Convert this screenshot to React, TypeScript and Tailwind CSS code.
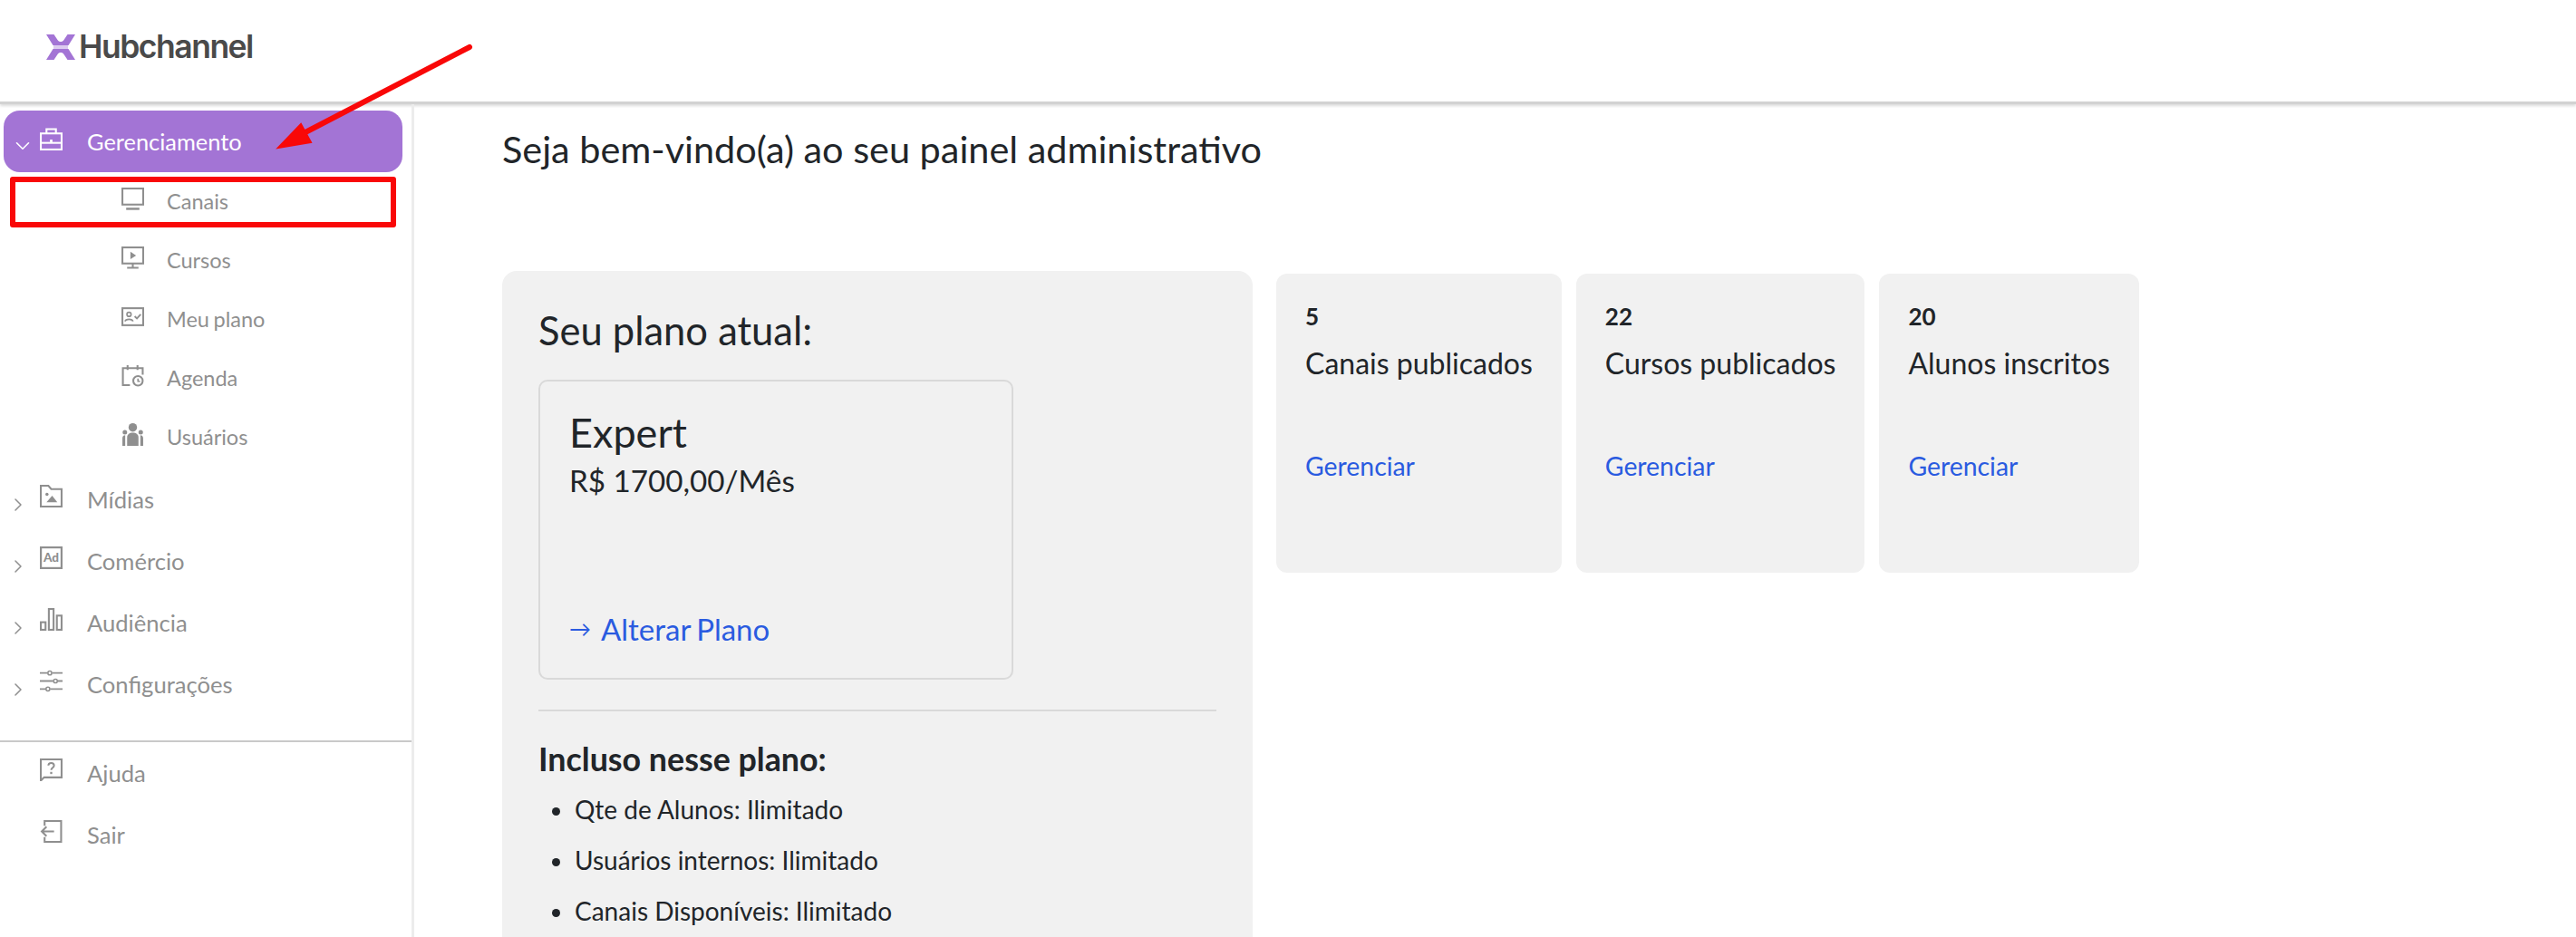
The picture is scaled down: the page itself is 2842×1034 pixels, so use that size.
import React from "react";
import { ChevronDown, ChevronRight } from "lucide-react";

const font = "font-['Lato','Open_Sans',sans-serif]";

const Svg = ({ children }: { children: React.ReactNode }) => (
    <svg viewBox="0 0 24 24" className="w-[25px] h-[25px] shrink-0" fill="none" stroke="currentColor" strokeWidth="2">
        {children}
    </svg>
);

const BriefcaseIcon = () => (
    <Svg>
        <path d="M7 6V1.500h10V6" />
        <rect x="1" y="6" width="22" height="17" />
        <path d="M1 16h22" />
        <path d="M12 12.500v3" strokeWidth="2.600" />
    </Svg>
);
const MonitorIcon = () => (
    <Svg>
        <rect x="1" y="1" width="22" height="17" />
        <path d="M5 22.500h14" strokeWidth="2.400" />
    </Svg>
);
const PlayMonitorIcon = () => (
    <Svg>
        <rect x="1" y="1" width="22" height="17" />
        <path d="M9.500 5.500l6 4-6 4z" fill="currentColor" stroke="none" />
        <path d="M12 18v4M6 22.500h12" />
    </Svg>
);
const IdCheckIcon = () => (
    <Svg>
        <rect x="1" y="3" width="22" height="18" />
        <circle cx="8" cy="9.500" r="2.200" strokeWidth="1.600" />
        <path d="M3.800 17c.6-3 7.800-3 8.400 0" strokeWidth="1.600" />
        <path d="M14 11.500l2.400 2.400 4-4.400" strokeWidth="1.800" />
    </Svg>
);
const CalendarClockIcon = () => (
    <Svg>
        <path d="M9 22H1.500V4h21v7" />
        <path d="M6.500 1v5M17 1v5" />
        <circle cx="17.500" cy="17.500" r="5" />
        <path d="M17.500 15v3h2.200" strokeWidth="1.500" />
    </Svg>
);
const UsersIcon = () => (
    <Svg>
        <g fill="currentColor" stroke="none">
            <circle cx="12" cy="4.500" r="4.500" />
            <circle cx="3.600" cy="9.500" r="2.400" />
            <circle cx="20.400" cy="9.500" r="2.400" />
            <path d="M6 24V15c0-3 2.200-5 6-5s6 2 6 5v9z" />
            <path d="M1 24v-8c0-2 1-3 3-3.200V24zM23 24v-8c0-2-1-3-3-3.200V24z" />
        </g>
    </Svg>
);
const FolderImageIcon = () => (
    <Svg>
        <path d="M1 1h8l3 3.500h11V23H1z" />
        <circle cx="7.500" cy="10" r="1.700" fill="currentColor" stroke="none" />
        <path d="M7 18.500l6-7 5.500 7z" fill="currentColor" stroke="none" />
    </Svg>
);
const AdIcon = () => (
    <Svg>
        <rect x="1" y="1" width="22" height="22" strokeWidth="2.200" />
        <text x="12" y="16.500" textAnchor="middle" fontSize="13" fontWeight="900" fontFamily="Lato, sans-serif" fill="currentColor" stroke="none">Ad</text>
    </Svg>
);
const BarsIcon = () => (
    <Svg>
        <rect x="1" y="15" width="5" height="8" />
        <rect x="9.500" y="1" width="5" height="22" />
        <rect x="18" y="8" width="5" height="15" />
    </Svg>
);
const SlidersIcon = () => (
    <Svg>
        <path d="M0 3.500h8M13 3.500h11M0 12h14M19 12h5M0 20.500h6M11 20.500h13" strokeWidth="1.800" />
        <circle cx="10.500" cy="3.500" r="2" strokeWidth="1.500" />
        <circle cx="16.500" cy="12" r="2" strokeWidth="1.500" />
        <circle cx="8.500" cy="20.500" r="2" strokeWidth="1.500" />
    </Svg>
);
const HelpIcon = () => (
    <Svg>
        <path d="M1 23.500V1h22v19H4.500z" />
        <path d="M9 7.500c0-3.600 6-3.600 6 0 0 2.500-3 2.300-3 4.800" strokeWidth="1.900" />
        <path d="M12 14.200v2.300" strokeWidth="2.200" />
    </Svg>
);
const ExitIcon = () => (
    <Svg>
        <path d="M5 6V1h17.500v22H5v-5" />
        <path d="M15 12H2M7 7l-5 5 5 5" />
    </Svg>
);

type NavItem = { label: string; icon: React.ReactNode };

const subItems: NavItem[] = [
    { label: "Canais", icon: <MonitorIcon /> },
    { label: "Cursos", icon: <PlayMonitorIcon /> },
    { label: "Meu plano", icon: <IdCheckIcon /> },
    { label: "Agenda", icon: <CalendarClockIcon /> },
    { label: "Usuários", icon: <UsersIcon /> },
];

const groups: NavItem[] = [
    { label: "Mídias", icon: <FolderImageIcon /> },
    { label: "Comércio", icon: <AdIcon /> },
    { label: "Audiência", icon: <BarsIcon /> },
    { label: "Configurações", icon: <SlidersIcon /> },
];

const footerItems: NavItem[] = [
    { label: "Ajuda", icon: <HelpIcon /> },
    { label: "Sair", icon: <ExitIcon /> },
];

const stats = [
    { value: "5", label: "Canais publicados" },
    { value: "22", label: "Cursos publicados" },
    { value: "20", label: "Alunos inscritos" },
];

const features = ["Qte de Alunos: Ilimitado", "Usuários internos: Ilimitado", "Canais Disponíveis: Ilimitado"];

const Sidebar = () => (
    <aside className="w-[457px] shrink-0 border-r-[3px] border-[#ececec] pt-[7px] text-[25.6px] text-[#8f8f8f]">
        {/* Gerenciamento */}
        <div className="ml-[4px] flex h-[68px] w-[440px] items-center rounded-[18px] bg-[#a374d5] text-white">
            <ChevronDown className="ml-[8px] mt-[10px] w-[26px] h-[26px] shrink-0" strokeWidth={1.5} />
            <span className="ml-[6px] mb-[5px]"><BriefcaseIcon /></span>
            <span className="ml-[27px] text-[25.4px]">Gerenciamento</span>
        </div>

        {subItems.map((item) => (
            <div key={item.label} className="flex h-[65px] items-center pl-[134px] text-[23.5px] [word-spacing:-1.5px]">
                <span className="mb-[6px]">{item.icon}</span>
                <span className="ml-[25px]">{item.label}</span>
            </div>
        ))}

        <div className="mt-[2px]">
            {groups.map((item) => (
                <div key={item.label} className="flex h-[68px] items-center pl-[8px]">
                    <ChevronRight className="mt-[12px] w-[24px] h-[24px] shrink-0" strokeWidth={1.5} />
                    <span className="ml-[12px] mb-[8px]">{item.icon}</span>
                    <span className="ml-[27px]">{item.label}</span>
                </div>
            ))}
        </div>

        <div className="mt-[28px] w-[454px] border-t-[2px] border-[#c9c9c9]">
            {footerItems.map((item) => (
                <div key={item.label} className="flex h-[68px] items-center pl-[44px]">
                    <span className="mb-[8px]">{item.icon}</span>
                    <span className="ml-[27px]">{item.label}</span>
                </div>
            ))}
        </div>
    </aside>
);

export default function App() {
    return (
        <div className={`relative flex h-[1034px] flex-col overflow-hidden bg-white ${font}`}>
            <header className="flex h-[115px] shrink-0 items-center border-b-[3px] border-[#d2d2d2] pb-[8px] pl-[51px] shadow-[0_2px_3px_rgba(0,0,0,0.14)]">
                <svg viewBox="0 0 32 28" className="h-[28px] w-[32px]" fill="#a374d5">
                    <path d="M0 0h8.500l4 6c1 1.500 2 2 3.500 2s2.500-.5 3.500-2l4-6H32l-7.500 12h-17z" />
                    <path d="M0 28h8.500l4-6c1-1.500 2-2 3.500-2s2.500.5 3.500 2l4 6H32l-7.500-12h-17z" />
                    <rect x="8" y="12" width="16" height="4" fill="#dccbf0" />
                </svg>
                <span className="ml-[4px] font-['Inter',sans-serif] text-[35.5px] font-semibold tracking-[-1.5px] text-[#4a4a4a]">Hubchannel</span>
            </header>

            <div className="flex min-h-0 flex-1">
                <Sidebar />

                <main className="min-w-0 flex-1 pl-[97px] text-[#212529]">
                    <h1 className="mt-[19px] h-[165px] text-[41.4px] leading-[60px]">Seja bem-vindo(a) ao seu painel administrativo</h1>

                    <div className="flex items-start gap-[26px]">
                        {/* Plano atual */}
                        <section className="h-[800px] w-[828px] shrink-0 rounded-[16px] bg-[#f1f1f1] px-[40px] pt-[32px]">
                            <h2 className="text-[43.5px] leading-[66px]">Seu plano atual:</h2>
                            <div className="mt-[22px] flex h-[331px] w-[524px] flex-col rounded-[10px] border-[2px] border-[#d9d9d9] pl-[32px] pt-[26px]">
                                <div className="text-[45px] leading-[60px]">Expert</div>
                                <div className="text-[33.2px] leading-[46px]">R$ 1700,00/Mês</div>
                                <a className="mt-[119px] flex items-center text-[33px] leading-[44px] text-[#2a5be0] [word-spacing:-2px]">
                                    <span className="mr-[11px] text-[24px]">→</span>Alterar Plano
                                </a>
                            </div>
                            <hr className="mt-[33px] w-[748px] border-t-[2px] border-[#d9d9d9]" />
                            <h3 className="mt-[29px] text-[35.8px] font-bold leading-[48px]">Incluso nesse plano:</h3>
                            <ul className="mt-[3px] list-disc pl-[40px] text-[28px]">
                                {features.map((feature) => (
                                    <li key={feature} className="h-[56px] leading-[56px]">{feature}</li>
                                ))}
                            </ul>
                        </section>

                        {/* Cards */}
                        <div className="mt-[3px] flex gap-[16px]">
                            {stats.map((stat) => (
                                <div key={stat.label} className="flex h-[330px] flex-col rounded-[12px] bg-[#f1f1f1] px-[32px] pt-[28px]">
                                    <div className="text-[26px] font-bold leading-[38px]">{stat.value}</div>
                                    <div className="mt-[9px] text-[32px] leading-[48px]">{stat.label}</div>
                                    <a className="mt-[69px] text-[28.4px] leading-[40px] text-[#2a5be0]">Gerenciar</a>
                                </div>
                            ))}
                        </div>
                    </div>
                </main>
            </div>

            {/* Anotações */}
            <div className="absolute left-[11px] top-[195px] h-[56px] w-[426px] rounded-[3px] border-[6px] border-[#f90808]" />
            <svg className="pointer-events-none absolute left-0 top-0" width="560" height="200" fill="none">
                <path d="M518 52L335 147" stroke="#f90808" strokeWidth="6" strokeLinecap="round" />
                <path d="M307 163L332 137L343 157Z" fill="#f90808" stroke="#f90808" strokeWidth="2" />
            </svg>
        </div>
    );
}
